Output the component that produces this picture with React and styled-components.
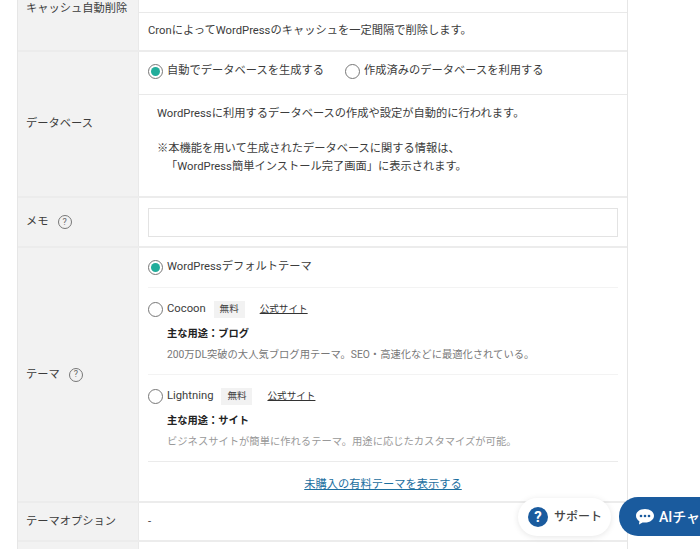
import styled, { createGlobalStyle } from "styled-components";

const GlobalStyle = createGlobalStyle`
  html, body {
    margin: 0;
    padding: 0;
    background: #fff;
  }
  * {
    box-sizing: border-box;
  }
`;

const Page = styled.div`
  position: relative;
  width: 700px;
  height: 549px;
  overflow: hidden;
  padding-left: 17px;
  font-family: Roboto, "Noto Sans CJK JP", sans-serif;
  font-size: 11.25px;
  line-height: 18px;
  color: #3c3c3c;
`;

const Table = styled.div`
  width: 611px;
  border-left: 1px solid #e6e6e6;
  border-right: 1px solid #e6e6e6;
`;

const Row = styled.div`
  display: grid;
  grid-template-columns: 121px 1fr;
  height: ${(props) => props.$height}px;
  border-bottom: ${(props) => (props.$last ? "0" : "2px solid #ececec")};
`;

const Label = styled.div`
  display: flex;
  align-items: ${(props) => (props.$top ? "flex-start" : "center")};
  gap: 9px;
  padding-left: 8px;
  background: #f2f2f2;
  border-right: 1px solid #e9e9e9;
`;

const Cell = styled.div`
  display: flex;
  flex-direction: column;
  min-width: 0;
`;

const SubRow = styled.div`
  display: flex;
  align-items: center;
  height: ${(props) => props.$height}px;
  padding: 0 0 ${(props) => props.$lift || 0}px 9px;
  border-bottom: ${(props) => (props.$line ? "1px solid #e9e9e9" : "0")};
`;

const RadioGroup = styled.div`
  display: flex;
  align-items: center;
  gap: 21px;
`;

const RadioItem = styled.span`
  display: inline-flex;
  align-items: center;
  gap: 4px;
`;

const Radio = styled.span`
  display: inline-flex;
  align-items: center;
  justify-content: center;
  width: 15px;
  height: 15px;
  flex: none;
  border: 1px solid #777;
  border-radius: 50%;
  background: #fff;
  &::after {
    content: "";
    width: 9px;
    height: 9px;
    border-radius: 50%;
    background: ${(props) => (props.$checked ? "#22ad9b" : "transparent")};
  }
`;

const Note = styled.div`
  padding: 10px 0 0 18px;
  line-height: 17.5px;
`;

const NoteGap = styled.div`
  height: 17.5px;
`;

const NoteIndent = styled.div`
  padding-left: 9px;
`;

const MemoCell = styled.div`
  display: flex;
  align-items: center;
  padding: 0 9px 0 9px;
`;

const MemoInput = styled.div`
  width: 100%;
  height: 29px;
  border: 1px solid #e3e3e3;
  background: #fff;
`;

const HelpIcon = styled.span`
  display: inline-flex;
  align-items: center;
  justify-content: center;
  width: 14px;
  height: 14px;
  border: 1px solid #777;
  border-radius: 50%;
  font-size: 9px;
  line-height: 1;
  color: #666;
`;

const ThemeList = styled.div`
  display: flex;
  flex-direction: column;
  margin: 0 9px 0 9px;
`;

const ThemeBlock = styled.div`
  height: ${(props) => props.$height}px;
  padding-top: ${(props) => props.$pad}px;
  border-bottom: ${(props) => `1px solid ${props.$faint ? "#f3f3f3" : "#ebebeb"}`};
`;

const ThemeHead = styled.div`
  display: flex;
  align-items: center;
  height: 18px;
`;

const Badge = styled.span`
  display: inline-flex;
  align-items: center;
  justify-content: center;
  width: 31px;
  height: 17px;
  margin: 0 15px 0 8px;
  background: #f2f2f2;
  font-size: 9.6px;
  color: #444;
`;

const SiteLink = styled.a`
  font-size: 9.6px;
  color: #333;
  text-decoration: underline;
`;

const ThemeUse = styled.div`
  margin: 7px 0 0 19px;
  font-size: 10.25px;
  font-weight: 700;
  color: #222;
`;

const ThemeDesc = styled.div`
  margin: 3px 0 0 19px;
  font-size: 10.3px;
  color: ${(props) => props.$color || "#777"};
  white-space: nowrap;
`;

const MoreRow = styled.div`
  display: flex;
  justify-content: center;
  padding-top: 14px;
`;

const MoreLink = styled.a`
  color: #1d6f9f;
  text-decoration: underline;
`;

const SupportButton = styled.div`
  position: absolute;
  left: 518px;
  top: 498px;
  display: flex;
  align-items: center;
  gap: 6px;
  width: 93px;
  height: 38px;
  padding-left: 10px;
  border-radius: 19px;
  background: #fff;
  box-shadow: 0 1px 6px rgba(0, 0, 0, 0.1);
  font-size: 12px;
  font-weight: 500;
  color: #444;
`;

const SupportMark = styled.span`
  display: inline-flex;
  align-items: center;
  justify-content: center;
  width: 20px;
  height: 20px;
  border-radius: 50%;
  background: #1a5b9e;
  color: #fff;
  font-size: 15px;
  font-weight: 700;
`;

const ChatButton = styled.div`
  position: absolute;
  left: 619px;
  top: 497px;
  display: flex;
  align-items: center;
  gap: 4px;
  width: 120px;
  height: 39px;
  padding-left: 16px;
  border-radius: 19px;
  background: #1a5b9e;
  color: #fff;
  font-size: 14px;
  font-weight: 500;
  white-space: nowrap;
`;

const ChatIcon = () => (
  <svg width="20" height="18" viewBox="0 0 20 18">
    <path
      d="M10 1C4.8 1 1 3.9 1 7.8c0 2.3 1.3 4.2 3.4 5.4L4 16.5l3.6-2.1c.8.2 1.6.2 2.4.2 5.2 0 9-3 9-6.8S15.2 1 10 1z"
      fill="#fff"
    />
    <circle cx="6" cy="8" r="1.3" fill="#1a5b9e" />
    <circle cx="10" cy="8" r="1.3" fill="#1a5b9e" />
    <circle cx="14" cy="8" r="1.3" fill="#1a5b9e" />
  </svg>
);

const App = () => (
  <>
    <GlobalStyle />
    <Page>
      <Table>
        <Row $height={52}>
          <Label $top>キャッシュ自動削除</Label>
          <Cell>
            <SubRow $height={13} $line />
            <SubRow $height={37} $lift={2}>CronによってWordPressのキャッシュを一定間隔で削除します。</SubRow>
          </Cell>
        </Row>
        <Row $height={146}>
          <Label>データベース</Label>
          <Cell>
            <SubRow $height={43} $lift={4} $line>
              <RadioGroup>
                <RadioItem>
                  <Radio $checked />
                  自動でデータベースを生成する
                </RadioItem>
                <RadioItem>
                  <Radio />
                  作成済みのデータベースを利用する
                </RadioItem>
              </RadioGroup>
            </SubRow>
            <Note>
              WordPressに利用するデータベースの作成や設定が自動的に行われます。
              <NoteGap />
              ※本機能を用いて生成されたデータベースに関する情報は、
              <NoteIndent>「WordPress簡単インストール完了画面」に表示されます。</NoteIndent>
            </Note>
          </Cell>
        </Row>
        <Row $height={50}>
          <Label>
            メモ
            <HelpIcon>?</HelpIcon>
          </Label>
          <MemoCell>
            <MemoInput />
          </MemoCell>
        </Row>
        <Row $height={255}>
          <Label>
            テーマ
            <HelpIcon>?</HelpIcon>
          </Label>
          <ThemeList>
            <ThemeBlock $height={40} $pad={10} $faint>
              <RadioItem>
                <Radio $checked />
                WordPressデフォルトテーマ
              </RadioItem>
            </ThemeBlock>
            <ThemeBlock $height={87} $pad={12} $faint>
              <ThemeHead>
                <RadioItem>
                  <Radio />
                  Cocoon
                </RadioItem>
                <Badge>無料</Badge>
                <SiteLink href="#">公式サイト</SiteLink>
              </ThemeHead>
              <ThemeUse>主な用途：ブログ</ThemeUse>
              <ThemeDesc>200万DL突破の大人気ブログ用テーマ。SEO・高速化などに最適化されている。</ThemeDesc>
            </ThemeBlock>
            <ThemeBlock $height={87} $pad={12}>
              <ThemeHead>
                <RadioItem>
                  <Radio />
                  Lightning
                </RadioItem>
                <Badge>無料</Badge>
                <SiteLink href="#">公式サイト</SiteLink>
              </ThemeHead>
              <ThemeUse>主な用途：サイト</ThemeUse>
              <ThemeDesc $color="#999">ビジネスサイトが簡単に作れるテーマ。用途に応じたカスタマイズが可能。</ThemeDesc>
            </ThemeBlock>
            <MoreRow>
              <MoreLink href="#">未購入の有料テーマを表示する</MoreLink>
            </MoreRow>
          </ThemeList>
        </Row>
        <Row $height={39}>
          <Label>テーマオプション</Label>
          <SubRow $height={37}>-</SubRow>
        </Row>
        <Row $height={20} $last>
          <Label />
          <Cell />
        </Row>
      </Table>
      <SupportButton>
        <SupportMark>?</SupportMark>
        サポート
      </SupportButton>
      <ChatButton>
        <ChatIcon />
        AIチャット
      </ChatButton>
    </Page>
  </>
);

export default App;
